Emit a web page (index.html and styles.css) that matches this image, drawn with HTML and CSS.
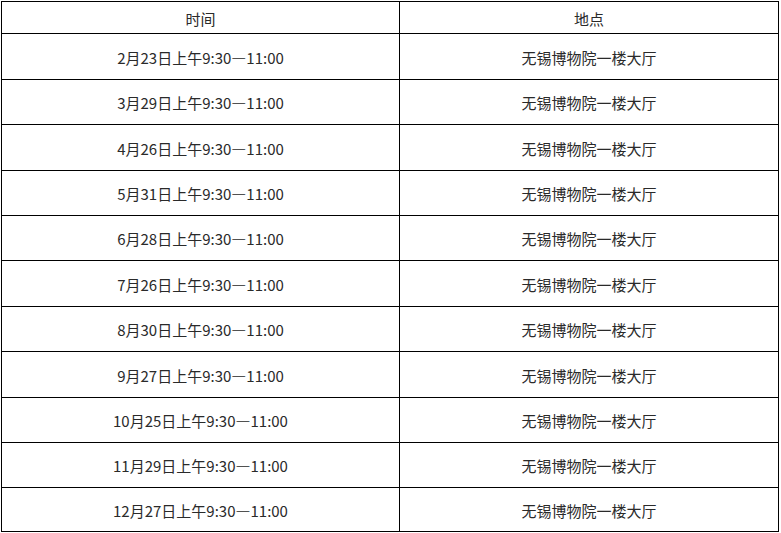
FILE: index.html
```html
<!DOCTYPE html>
<html lang="zh">
<head>
<meta charset="utf-8">
<link rel="stylesheet" href="styles.css">
</head>
<body>
<table class="schedule">
  <thead>
    <tr class="head-row"><th>时间</th><th>地点</th></tr>
  </thead>
  <tbody>
    <tr class="tall"><td>2月23日上午9:30—11:00</td><td>无锡博物院一楼大厅</td></tr>
    <tr><td>3月29日上午9:30—11:00</td><td>无锡博物院一楼大厅</td></tr>
    <tr class="tall"><td>4月26日上午9:30—11:00</td><td>无锡博物院一楼大厅</td></tr>
    <tr><td>5月31日上午9:30—11:00</td><td>无锡博物院一楼大厅</td></tr>
    <tr><td>6月28日上午9:30—11:00</td><td>无锡博物院一楼大厅</td></tr>
    <tr class="tall"><td>7月26日上午9:30—11:00</td><td>无锡博物院一楼大厅</td></tr>
    <tr><td>8月30日上午9:30—11:00</td><td>无锡博物院一楼大厅</td></tr>
    <tr class="tall"><td>9月27日上午9:30—11:00</td><td>无锡博物院一楼大厅</td></tr>
    <tr><td>10月25日上午9:30—11:00</td><td>无锡博物院一楼大厅</td></tr>
    <tr><td>11月29日上午9:30—11:00</td><td>无锡博物院一楼大厅</td></tr>
    <tr class="short"><td>12月27日上午9:30—11:00</td><td>无锡博物院一楼大厅</td></tr>
  </tbody>
</table>
</body>
</html>
```
FILE: styles.css
```css
html, body {
  margin: 0;
  padding: 0;
  background: #fff;
}
body {
  padding: 1px 0 0 1px;
  font-family: "Noto Sans CJK SC", "Noto Sans", sans-serif;
  font-size: 15px;
  color: #2a2a2a;
}
.schedule {
  border-collapse: collapse;
  width: 778px;
  table-layout: fixed;
}
.schedule th,
.schedule td {
  border: 1px solid #000;
  text-align: center;
  vertical-align: middle;
  padding: 2px 0 0;
  font-weight: normal;
  line-height: 20px;
}
.schedule th:first-child,
.schedule td:first-child {
  width: 397px;
}
.head-row th {
  height: 29px;
}
.schedule tbody td {
  height: 42px;
}
.schedule tbody tr.tall td {
  height: 43px;
}
.schedule tbody tr.short td {
  height: 41px;
}
```
